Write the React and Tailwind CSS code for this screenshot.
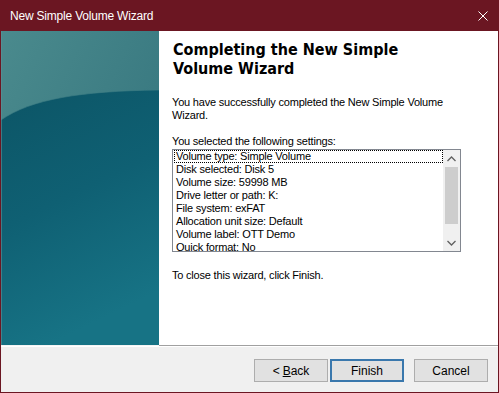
import React from "react";

const items = [
  "Volume type: Simple Volume",
  "Disk selected: Disk 5",
  "Volume size: 59998 MB",
  "Drive letter or path: K:",
  "File system: exFAT",
  "Allocation unit size: Default",
  "Volume label: OTT Demo",
  "Quick format: No",
];

function LeftArt() {
  return (
    <svg width="158" height="314" viewBox="0 0 158 314" className="block">
      <defs>
        <linearGradient id="top" x1="0" y1="0" x2="1" y2="1">
          <stop offset="0" stopColor="#4a8a8d" />
          <stop offset="1" stopColor="#30707a" />
        </linearGradient>
        <linearGradient id="bot" x1="0" y1="0" x2="0.3" y2="1">
          <stop offset="0" stopColor="#0c5566" />
          <stop offset="0.5" stopColor="#0f6073" />
          <stop offset="1" stopColor="#177385" />
        </linearGradient>
      </defs>
      <rect x="0" y="0" width="158" height="314" fill="url(#top)" />
      <path d="M0 89 C 30 68, 80 60, 158 59 L158 314 L0 314 Z" fill="url(#bot)" />
      <path d="M0 89 C 30 68, 80 60, 158 59" fill="none" stroke="#3f7f86" strokeWidth="1" opacity="0.6" />
      <rect x="0" y="0" width="1" height="314" fill="#5e9397" opacity="0.6" />
    </svg>
  );
}

export default function App() {
  const sans = { fontFamily: '"Liberation Sans", Arial, sans-serif' };
  return (
    <div className="w-[499px] h-[393px] bg-[#6b1622] flex flex-col overflow-hidden" style={sans}>
      <div className="h-[31px] flex items-center justify-between pl-[10px] pr-[11px] text-white text-[12px]">
        <span className="tracking-[-0.2px]">New Simple Volume Wizard</span>
        <svg width="10" height="10" viewBox="0 0 10 10">
          <path d="M0.5 0.5 L9.5 9.5 M9.5 0.5 L0.5 9.5" stroke="#ffffff" strokeWidth="1" />
        </svg>
      </div>
      <div className="flex flex-col mx-[1px] mb-[1px] flex-1 bg-[#f0f0f0]">
        <div className="h-[314px] flex">
          <LeftArt />
          <div className="flex-1 bg-white pl-[13px] pt-[9px] flex flex-col text-[11px] leading-[13px] text-black tracking-[-0.2px]">
            <h1
              className="text-[16px] leading-[19px] font-bold text-black pl-[1px] tracking-normal"
              style={{ fontFamily: '"DejaVu Sans Condensed", "DejaVu Sans", Verdana, sans-serif', fontStretch: "condensed" }}
            >
              Completing the New Simple
              <br />
              Volume Wizard
            </h1>
            <p className="mt-[18px]">
              You have successfully completed the New Simple Volume
              <br />
              Wizard.
            </p>
            <p className="mt-[13px]">You selected the following settings:</p>
            <div className="mt-[1px] w-[289px] h-[103px] border border-[#828790] flex bg-white">
              <div className="flex-1 overflow-hidden pl-[1px]">
                {items.map((t, i) => (
                  <div
                    key={t}
                    className={
                      "h-[13px] pl-[2px] whitespace-nowrap " +
                      (i === 0 ? "outline outline-1 outline-dotted outline-black -outline-offset-1" : "")
                    }
                  >
                    {t}
                  </div>
                ))}
              </div>
              <div className="w-[17px] bg-[#f0f0f0] flex flex-col">
                <div className="h-[17px] flex items-center justify-center">
                  <svg width="9" height="6" viewBox="0 0 9 6">
                    <path d="M0.5 5 L4.5 1 L8.5 5" fill="none" stroke="#606060" strokeWidth="1.3" />
                  </svg>
                </div>
                <div className="h-[57px] mx-[2px] bg-[#cdcdcd]" />
                <div className="flex-1" />
                <div className="h-[17px] flex items-center justify-center">
                  <svg width="9" height="6" viewBox="0 0 9 6">
                    <path d="M0.5 1 L4.5 5 L8.5 1" fill="none" stroke="#606060" strokeWidth="1.3" />
                  </svg>
                </div>
              </div>
            </div>
            <p className="mt-[17px]">To close this wizard, click Finish.</p>
          </div>
        </div>
        <div className="h-px flex">
          <div className="w-[158px] bg-[#f4f4f4]" />
          <div className="flex-1 bg-[#a0a0a0]" />
        </div>
        <div className="h-px bg-white" />
        <div className="flex-1 flex justify-end items-start pt-[12px] pr-[10px] text-[12px]">
          <button className="w-[74px] h-[23px] bg-[#e1e1e1] border border-[#adadad] flex items-center justify-center text-black">
            &lt; <span className="underline ml-[3px]">B</span>ack
          </button>
          <button className="ml-[2px] w-[74px] h-[23px] bg-[#e1e1e1] border-2 border-[#3a78ad] flex items-center justify-center text-black">
            Finish
          </button>
          <button className="ml-[10px] w-[74px] h-[23px] bg-[#e1e1e1] border border-[#adadad] flex items-center justify-center text-black">
            Cancel
          </button>
        </div>
      </div>
    </div>
  );
}
